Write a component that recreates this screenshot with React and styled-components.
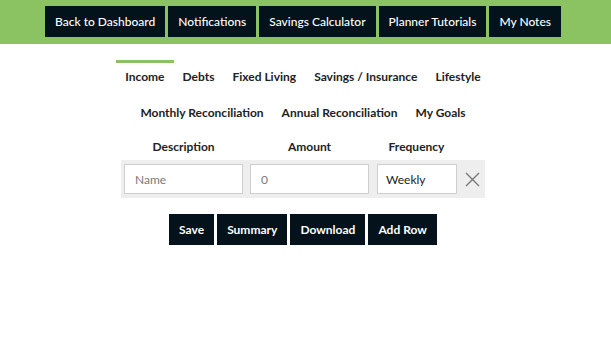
import React from 'react';
import styled, {createGlobalStyle} from 'styled-components';

const GlobalStyle = createGlobalStyle`
  body {
    margin: 0;
    font-family: Lato, "Open Sans", sans-serif;
    background: #fff;
  }
`;

const Page = styled.div`
  padding-right: 5px;
`;

const TopBar = styled.div`
  background: #8bc363;
  height: 44px;
  padding: 6px 5px 0 0;
  margin-right: -5px;
  box-sizing: border-box;
  display: flex;
  justify-content: center;
  align-items: flex-start;
  gap: 3px;
`;

const DarkButton = styled.button`
  background: #03121b;
  color: #fff;
  border: none;
  height: 31px;
  padding: 0 ${p => p.pad || 10}px;
  font-family: Lato, sans-serif;
  font-size: 12px;
  font-weight: ${p => p.weight || 500};
  cursor: pointer;
`;

const Tabs = styled.div`
  display: flex;
  justify-content: center;
  margin-top: ${p => p.top}px;
`;

const Tab = styled.div`
  padding: 0 9px;
  height: 31px;
  box-sizing: border-box;
  line-height: 28px;
  font-size: 12px;
  font-weight: 700;
  color: #222;
  border-top: 3px solid ${p => (p.active ? '#8bc363' : 'transparent')};
`;

const Table = styled.div`
  display: flex;
  flex-direction: column;
  align-items: center;
  margin-top: 9px;
  gap: 2px;
`;

const Grid = styled.div`
  display: grid;
  grid-template-columns: 119px 119px 81px 22px;
  column-gap: 7px;
  align-items: center;
  width: 364px;
  padding-left: 3px;
  box-sizing: border-box;
`;

const HeaderRow = styled(Grid)`
  height: 22px;
`;

const HeaderCell = styled.div`
  text-align: center;
  font-size: 12px;
  font-weight: 700;
  color: #222;
  line-height: 22px;
`;

const Row = styled(Grid)`
  background: #eeeeee;
  height: 38px;
`;

const Input = styled.input`
  width: 100%;
  height: 30px;
  box-sizing: border-box;
  border: 1px solid #cfcfcf;
  background: #fff;
  padding: 0 10px;
  font-family: Lato, sans-serif;
  font-size: 12px;
  color: #333;
  outline: none;
  &::placeholder {
    color: #7a7a7a;
  }
`;

const Select = styled.select`
  width: 80px;
  height: 30px;
  margin-left: 1px;
  box-sizing: border-box;
  border: 1px solid #cfcfcf;
  background: #fff;
  padding: 0 8px;
  appearance: none;
  font-family: Lato, sans-serif;
  font-size: 12px;
  color: #222;
`;

const Remove = styled.button`
  background: none;
  border: none;
  padding: 0;
  width: 16px;
  height: 16px;
  display: flex;
  align-items: center;
  justify-content: center;
  cursor: pointer;
`;

const Actions = styled.div`
  display: flex;
  justify-content: center;
  gap: 3px;
  margin-top: 16px;
`;

export default function App() {
  const nav = ['Back to Dashboard', 'Notifications', 'Savings Calculator', 'Planner Tutorials', 'My Notes'];
  const tabs1 = ['Income', 'Debts', 'Fixed Living', 'Savings / Insurance', 'Lifestyle'];
  const tabs2 = ['Monthly Reconciliation', 'Annual Reconciliation', 'My Goals'];
  return (
    <Page>
      <GlobalStyle/>
      <TopBar>
        {nav.map(n => <DarkButton key={n} pad={10}>{n}</DarkButton>)}
      </TopBar>
      <Tabs top={16}>
        {tabs1.map((t, i) => <Tab key={t} active={i === 0}>{t}</Tab>)}
      </Tabs>
      <Tabs top={5}>
        {tabs2.map(t => <Tab key={t}>{t}</Tab>)}
      </Tabs>
      <Table>
        <HeaderRow>
          <HeaderCell>Description</HeaderCell>
          <HeaderCell>Amount</HeaderCell>
          <HeaderCell>Frequency</HeaderCell>
        </HeaderRow>
        <Row>
          <Input placeholder="Name"/>
          <Input placeholder="0"/>
          <Select defaultValue="Weekly">
            <option>Weekly</option>
            <option>Monthly</option>
            <option>Yearly</option>
          </Select>
          <Remove aria-label="Remove row">
            <svg width="15" height="15" viewBox="0 0 15 15">
              <path d="M1 1L14 14M14 1L1 14" stroke="#777" strokeWidth="1.4" fill="none"/>
            </svg>
          </Remove>
        </Row>
      </Table>
      <Actions>
        <DarkButton pad={10} weight={700}>Save</DarkButton>
        <DarkButton pad={10} weight={700}>Summary</DarkButton>
        <DarkButton pad={10} weight={700}>Download</DarkButton>
        <DarkButton pad={10} weight={700}>Add Row</DarkButton>
      </Actions>
    </Page>
  );
}
